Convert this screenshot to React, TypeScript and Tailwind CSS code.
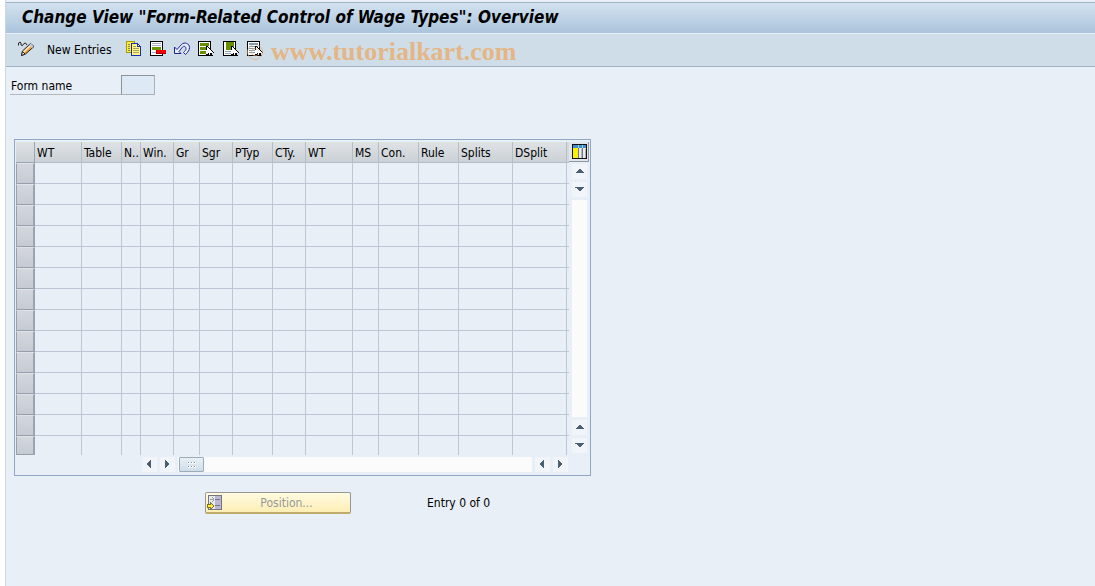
import type { ReactNode } from 'react';
import { clsx } from 'clsx';

const columns = [
  { label: 'WT', width: 'w-[47px]' },
  { label: 'Table', width: 'w-[40px]' },
  { label: 'N..', width: 'w-[19px]' },
  { label: 'Win.', width: 'w-[33px]' },
  { label: 'Gr', width: 'w-[26px]' },
  { label: 'Sgr', width: 'w-[33px]' },
  { label: 'PTyp', width: 'w-[40px]' },
  { label: 'CTy.', width: 'w-[33px]' },
  { label: 'WT', width: 'w-[47px]' },
  { label: 'MS', width: 'w-[26px]' },
  { label: 'Con.', width: 'w-[40px]' },
  { label: 'Rule', width: 'w-[40px]' },
  { label: 'Splits', width: 'w-[54px]' },
  { label: 'DSplit', width: 'w-[54px]' },
];

const ROWS = 14;

function Icon({ children }: { children: ReactNode }) {
  return (
    <svg viewBox="0 0 16 16" className="w-4 h-4 shrink-0" shapeRendering="crispEdges" aria-hidden="true">
      {children}
    </svg>
  );
}

function Cursor() {
  return (
    <>
      <path d="M8 5h2v1h1v1h1v1h1v1h1v1h1v1h1v1h-2v2h1v1h-3v-2h-1v1h-3z" fill="#000" />
      <path d="M9 6h1v1h1v1h1v1h1v1h1v1h1v1h-3v2h-1v-2h-1v1h-2z" fill="#fff" />
    </>
  );
}

function Page() {
  return (
    <>
      <path d="M0 0h13v15H0z" fill="#000" />
      <path d="M1 1h11v13H1z" fill="#fff" />
    </>
  );
}

function PencilIcon() {
  return (
    <svg viewBox="0 0 17 16" className="w-[17px] h-4 shrink-0" aria-hidden="true">
      <path d="M.5 4.500V2l1.500-1 1 1v2l1.500.5L6 2.500 7.500 2 9 4" fill="none" stroke="#222" />
      <path d="M3.500 14.500l1-4.500 8-7.500 3.500 3-8.500 7.500z" fill="#f2a13c" stroke="#222" />
      <path d="M5 10.500l6.500-6 1 1L6 11.500z" fill="#fff3d0" />
      <path d="M11 4l2-1.500 2.500 3L14 7z" fill="#c3cbe8" />
      <path d="M3.500 14.500l1-4L7 13z" fill="#fff" stroke="#222" />
    </svg>
  );
}

function CopyIcon() {
  return (
    <Icon>
      <path d="M0 0h9v12H0z" fill="#a39c10" />
      <path d="M1 1h7v10H1z" fill="#ffee38" />
      <path d="M2 3h2v1H2zM2 5h2v1H2zM2 7h2v1H2zM2 9h2v1H2z" fill="#8a8440" />
      <path d="M5 2h7v1h1v1h1v1h1v10H5z" fill="#1c2caf" />
      <path d="M6 3h5v3h3v8H6z" fill="#fff684" />
      <path d="M12 4h1v1h-1z" fill="#fff" />
      <path d="M7 5h3v1H7zM7 7h6v1H7zM7 9h6v1H7zM7 11h6v1H7z" fill="#a8a25a" />
    </Icon>
  );
}

function DeleteIcon() {
  return (
    <Icon>
      <Page />
      <path d="M2 2h9v1H2zM2 4h9v1H2zM2 11h5v1H2z" fill="#a9aeca" />
      <path d="M2 6h9v3H2z" fill="#6c9800" />
      <path d="M6 9h10v4H6z" fill="#a00000" />
      <path d="M7 9h9v3H7z" fill="#f50000" />
    </Icon>
  );
}

function UndoIcon() {
  return (
    <svg viewBox="0 0 16 16" className="w-4 h-4 shrink-0" aria-hidden="true">
      <path
        d="M.5 6v6.500h6.500L5 10.500 8.500 6c1.500-1.500 3.500-.5 3.500 1.500 0 1.500-1 2.500-2.500 4l2 2C14 11 15.500 9 15.500 6.500c0-4-5-6-8-3L3 8.500z"
        fill="#e8eefb"
        stroke="#1c2493"
      />
    </svg>
  );
}

function SelectAllIcon() {
  return (
    <Icon>
      <Page />
      <path d="M2 2h9v3H2zM2 6h9v3H2zM2 10h9v3H2z" fill="#668f00" />
      <Cursor />
    </Icon>
  );
}

function SelectBlockIcon() {
  return (
    <Icon>
      <Page />
      <path d="M3 1h8v8H3z" fill="#668f00" />
      <path d="M2 10h9v1H2zM2 12h9v1H2z" fill="#8ba8ba" />
      <Cursor />
    </Icon>
  );
}

function DeselectIcon() {
  return (
    <Icon>
      <Page />
      <path d="M2 2h9v2H2zM2 5h9v1H2zM2 7h9v1H2zM2 9h9v1H2zM2 11h9v1H2z" fill="#829cae" />
      <Cursor />
    </Icon>
  );
}

function ConfigIcon() {
  return (
    <svg viewBox="0 0 15 15" className="w-[15px] h-[15px]" shapeRendering="crispEdges" aria-hidden="true">
      <path d="M0 0h15v15H0z" fill="#111" />
      <path d="M1 1h13v3H1z" fill="#3d8fc6" />
      <path d="M1 4h5v10H1z" fill="#fff000" />
      <path d="M7 4h3v10H7zM11 4h3v10h-3z" fill="#e9e9ee" />
      <path d="M9 5h1v9H9zM13 5h1v9h-1z" fill="#aeb3bd" />
      <path d="M6 1h1v3H6zM10 1h1v3h-1z" fill="#9dcbea" />
      <path d="M6 4h1v10H6zM10 4h1v10h-1z" fill="#777" />
    </svg>
  );
}

function PositionIcon() {
  return (
    <Icon>
      <path d="M1 0h14v15H1z" fill="#76757e" />
      <path d="M2 1h6v13H2z" fill="#e4ebef" />
      <path d="M8 1h6v13H8z" fill="#bbb9d2" />
      <path d="M8 4h5v1H8zM8 10h5v1H8z" fill="#77758a" />
      <path d="M3 4h4v1H3zM5 2h1v1H5zM5 6h1v1H5zM6 3h1v3H6z" fill="#98a1a8" />
      <path d="M0 9h3V7h1v1h1v1h1v1h1v2H6v1H5v1H4v1H3v-2H0z" fill="#7a7420" />
      <path d="M1 10h3V9h1v1h1v2H5v1H4v-1H1z" fill="#ffec47" />
    </Icon>
  );
}

const arrows = {
  up: 'M7 5h2v1h1v1h1v1h1v1H4V8h1V7h1V6h1z',
  down: 'M3 5h9v1h-1v1h-1v1H9v1H7V8H6V7H5V6H3z',
  left: 'M9 3v8H8v-1H7V9H6V8H5V6h1V5h1V4h1V3z',
  right: 'M5 3h1v1h1v1h1v1h1v2H8v1H7v1H6v1H5z',
};

function ScrollButton({ dir, label }: { dir: keyof typeof arrows; label: string }) {
  return (
    <button aria-label={label} className="w-[15px] h-[15px] shrink-0 bg-[#f1f5f9]">
      <svg viewBox="0 0 15 15" className="w-[15px] h-[15px]" shapeRendering="crispEdges" aria-hidden="true">
        <path d={arrows[dir]} fill="#4a6070" />
      </svg>
    </button>
  );
}

function Toolbar() {
  return (
    <div className="flex items-center h-8 pl-3 bg-[#cfdde8] border-b border-[#9fb3c6] box-content">
      <button aria-label="Display / change" className="pb-[2px]">
        <PencilIcon />
      </button>
      <button className="ml-3 mr-[11px] w-[68px] whitespace-nowrap text-left">New Entries</button>
      <div className="flex gap-2 pb-[2px]">
        <button aria-label="Copy as"><CopyIcon /></button>
        <button aria-label="Delete"><DeleteIcon /></button>
        <button aria-label="Undo change"><UndoIcon /></button>
        <button aria-label="Select all"><SelectAllIcon /></button>
        <button aria-label="Select block" className="ml-px"><SelectBlockIcon /></button>
        <div className="relative">
          <button aria-label="Deselect all" className="block"><DeselectIcon /></button>
          <svg
            viewBox="0 0 18 18"
            className="absolute left-0 top-1 w-[18px] h-[18px] pointer-events-none"
            fill="none"
            stroke="#e3a76b"
            strokeOpacity="0.65"
            aria-hidden="true"
          >
            <circle cx="8" cy="7" r="7.500" />
            <path d="M11.500 5.500c-2-3-7-2-7 1.500s5 5 7 2" />
          </svg>
        </div>
      </div>
      <span className="ml-2 pt-1 font-['Liberation_Serif',serif] font-bold text-[26px] leading-7 text-[#e4b686]">
        www.tutorialkart.com
      </span>
    </div>
  );
}

function WageTypeTable() {
  return (
    <table className="table-fixed border-separate border-spacing-0 w-[553px]">
      <thead>
        <tr className="h-[21px]">
          <td className="w-[19px] p-0 bg-linear-to-b from-[#dfe2e5] to-[#cbd1d6] border-r border-b border-[#9aa5b3]" />
          {columns.map((col, i) => (
            <th
              key={i}
              className={clsx(
                col.width,
                'h-[21px] pt-[2px] pb-0 pr-0 pl-[2px] text-left font-normal leading-[18px] whitespace-nowrap overflow-hidden',
                'bg-linear-to-b from-[#dfe2e5] to-[#cbd1d6] border-r border-b border-[#b3bcc9]'
              )}
            >
              {col.label}
            </th>
          ))}
          <td className="p-0 bg-[#d5dade] border-b border-[#b3bcc9]" />
        </tr>
      </thead>
      <tbody>
        {Array.from({ length: ROWS }, (_, row) => {
          const last = row === ROWS - 1;
          return (
            <tr key={row} className={last ? 'h-[19px]' : 'h-[21px]'}>
              <td className="p-0 bg-linear-to-b from-[#d3d7dd] to-[#c6cbd3] border border-t-[#e0e4e8] border-l-[#9aa1ac] border-r-2 border-r-[#9ba3b0] border-b-[#969eaa]" />
              {columns.map((_, i) => (
                <td key={i} className={clsx('p-0 border-r border-[#bec6d6]', !last && 'border-b')} />
              ))}
              <td className={clsx('p-0 border-[#bec6d6]', !last && 'border-b')} />
            </tr>
          );
        })}
      </tbody>
    </table>
  );
}

export default function App() {
  return (
    <div className="min-h-screen pl-[5px] bg-white text-black text-[12px] leading-4 font-['DejaVu_Sans_Condensed','DejaVu_Sans',sans-serif]">
      <div className="min-h-screen pt-[2px] bg-[#e8eff6] border-l border-[#cdd6e4]">
        <header className="border-t border-[#9fb3c6]">
          <h1 className="h-[30px] pl-4 bg-linear-to-b from-[#d3e2ef] to-[#abc4dc] text-[17px] leading-[28px] font-bold italic whitespace-nowrap">
            Change View "Form-Related Control of Wage Types": Overview
          </h1>
          <div className="border-t border-[#e8f0f7]">
            <Toolbar />
          </div>
        </header>

        <main className="pl-2">
          <div className="flex mt-2">
            <label htmlFor="form-name" className="-ml-1 w-[111px] h-5 pl-px pt-[3px] border-b border-[#b4b8bd]">
              Form name
            </label>
            <input
              id="form-name"
              className="w-[34px] h-5 px-1 bg-[#dde9f4] border border-[#a9b0b8] border-t-[#8d9298] border-l-[#8d9298] outline-none"
            />
          </div>

          <section className="w-fit mt-11 pt-[2px] pl-px pr-px pb-[3px] border border-[#8fa8c6]">
            <div className="flex">
              <WageTypeTable />
              <div className="flex flex-col items-end w-5">
                <button
                  aria-label="Table settings"
                  className="flex items-center justify-center w-5 h-5 shrink-0 pl-px bg-[#dfe5ea] border-r border-b border-[#8e98a3]"
                >
                  <ConfigIcon />
                </button>
                <div className="flex flex-col flex-1 gap-[3px] pt-[2px] pb-[2px] mr-[2px]">
                  <ScrollButton dir="up" label="Scroll up" />
                  <ScrollButton dir="down" label="Scroll down" />
                  <div className="flex-1 bg-[#fbfbfb]" />
                  <ScrollButton dir="up" label="Row up" />
                  <ScrollButton dir="down" label="Row down" />
                </div>
              </div>
            </div>
            <div className="flex gap-[3px] mt-[2px] ml-[126px] mr-[21px]">
              <ScrollButton dir="left" label="Scroll left" />
              <ScrollButton dir="right" label="Scroll right" />
              <div className="flex-1 pl-px bg-[#fbfbfb]">
                <div className="flex items-center justify-center w-[25px] h-[15px] bg-linear-to-b from-[#e9f0f6] to-[#cfdde8] border border-[#9aabba] rounded-[1px]">
                  <svg viewBox="0 0 8 6" className="w-2 h-[6px]" shapeRendering="crispEdges" aria-hidden="true">
                    <path d="M0 0h2v2H0zM3 0h2v2H3zM6 0h2v2H6zM0 4h2v2H0zM3 4h2v2H3zM6 4h2v2H6z" fill="#fff" />
                    <path d="M0 0h1v1H0zM3 0h1v1H3zM6 0h1v1H6zM0 4h1v1H0zM3 4h1v1H3zM6 4h1v1H6z" fill="#8297a8" />
                  </svg>
                </div>
              </div>
              <ScrollButton dir="left" label="Column left" />
              <ScrollButton dir="right" label="Column right" />
            </div>
          </section>

          <div className="flex items-center mt-4 ml-[191px]">
            <button className="flex items-center w-[146px] h-[22px] pl-px bg-linear-to-b from-[#fffbe0] to-[#fdeeb5] border border-[#979797] border-b-2 border-b-[#c0aa69] rounded-[2px] text-[#98989a]">
              <PositionIcon />
              <span className="flex-1 text-center">Position...</span>
            </button>
            <span className="ml-[76px]">Entry 0 of 0</span>
          </div>
        </main>
      </div>
    </div>
  );
}
